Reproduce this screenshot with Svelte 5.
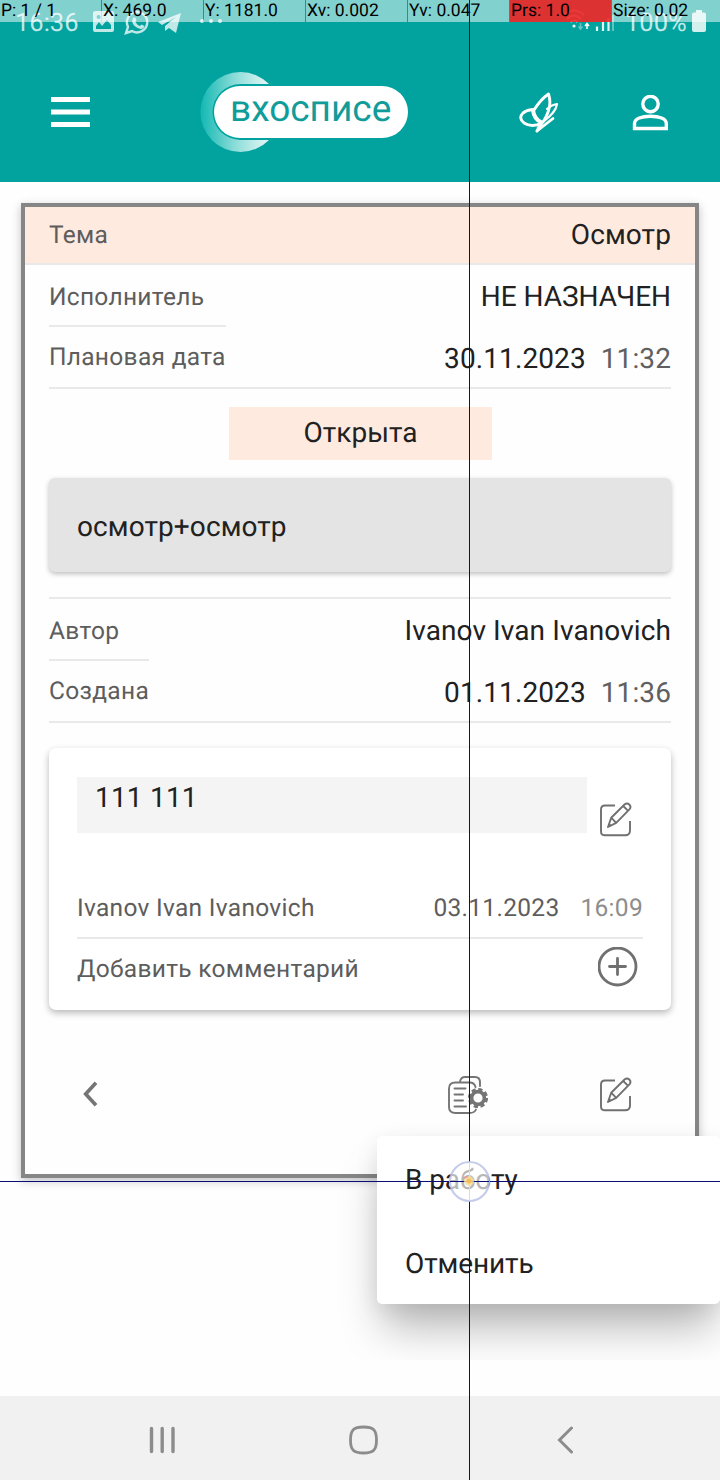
<script>
  const touch = ['P: 1 / 1', 'X: 469.0', 'Y: 1181.0', 'Xv: 0.002', 'Yv: 0.047', 'Prs: 1.0', 'Size: 0.02'];
  const groups = {
    plan: { a: 'Исполнитель', av: 'НЕ НАЗНАЧЕН', b: 'Плановая дата', date: '30.11.2023', time: '11:32' },
    created: { a: 'Автор', av: 'Ivanov Ivan Ivanovich', b: 'Создана', date: '01.11.2023', time: '11:36' }
  };
</script>

{#snippet edit()}
  <svg class="edit" width="34" height="36" viewBox="0 0 34 36" fill="none" stroke="#707070" stroke-width="1.9" stroke-linejoin="round">
    <path d="M16 3.500H6Q2 3.500 2 7.500V29.500Q2 33.300 6 33.300H26Q31 33.300 31 28.500V19" />
    <path d="M9 25L12.2 15.700L25.8 2.300Q28 .4 30.3 2.500Q32.6 4.900 30.4 7.300L17.2 20.900Z M12.2 15.700L17.2 20.900M24.2 4L28.9 8.700" />
    <path d="M9 25L10.200 21L12.800 23.500Z" fill="#707070" stroke="none" />
  </svg>
{/snippet}

{#snippet pair(g)}
  <div class="pair">
    <div class="labels">
      <div class="label first">{g.a}</div>
      <div class="label">{g.b}</div>
    </div>
    <div class="values">
      <div class="value" class:caps={g.av === g.av.toUpperCase()}>{g.av}</div>
      <div class="value second">{g.date}<span class="time">{g.time}</span></div>
    </div>
  </div>
{/snippet}

<div class="screen">
  <header>
    <div class="status">
      <span class="clock">16:36</span>
      <svg class="si" width="135" height="26" viewBox="0 0 135 26" fill="#c0e8e7">
        <path fill-rule="evenodd" d="M3 2H19Q21 2 21 4V21Q21 23 19 23H2Q0 23 0 21V4Q0 2 3 2ZM3 20H18V16L14 11L9 17L6 13L3 17ZM5.5 6A2 2 0 1 0 5.6 6Z" />
        <path d="M35 17.8A10.2 10.2 0 1 1 39 22L33 24Z" fill="none" stroke="#c0e8e7" stroke-width="2.4" />
        <path d="M40 9Q42 7 43.5 11L42.5 13Q44 16 47 17L48.5 15.5L51.5 17Q51 20 47.5 20Q40 18 39 12Z" />
        <path d="M65 13L88 4L83 24L76 19L72 22L72 17L83 8L69 16Z" />
        <circle cx="109" cy="12" r="2" /><circle cx="118" cy="12" r="2" /><circle cx="127" cy="12" r="2" />
      </svg>
      <span class="grow"></span>
      <svg width="52" height="24" viewBox="0 0 52 24" fill="none" stroke="#b9e6e5" stroke-width="2">
        <path d="M2 6Q12 -3 22 6M5 10Q12 3 19 10" />
        <path d="M8.500 13Q12 10 15.500 13" />
        <circle cx="12" cy="17" r="1.600" fill="#e4f6f5" stroke="none" />
        <path d="M18.500 14V19.500M16.500 17.500L18.500 20L20.500 17.500" stroke-width="1.500" opacity=".55" />
        <path d="M25 20V15M23 17L25 14.500L27 17" stroke="#fff" stroke-width="1.500" />
        <path d="M35 22V17.500M41 22V13M46.500 22V9" stroke="#e0f5f4" stroke-width="2.200" /><path d="M51 22V6" opacity=".5" />
      </svg>
      <span class="pct">100%</span>
      <svg class="bat" width="14" height="22" viewBox="0 0 14 22" fill="#d3efee"><path d="M4 0H10V2.500H12Q14 2.500 14 4.500V20Q14 22 12 22H2Q0 22 0 20V4.500Q0 2.500 2 2.500H4Z" /></svg>
    </div>
    <div class="bar">
      <svg class="burger" width="40" height="32" viewBox="0 0 40 32" fill="#fff"><path d="M0 0H39V5H0ZM0 12.500H39V17.500H0ZM0 25H39V30H0Z" /></svg>
      <div class="logo">
        <svg width="209" height="82" viewBox="0 0 209 82">
          <defs><linearGradient id="moon" x1="0" x2="1"><stop offset="0" stop-color="#12b8b3" /><stop offset=".5" stop-color="#8bdcd8" /><stop offset="1" stop-color="#e6f7f6" /></linearGradient></defs>
          <path d="M69 13A40 40 0 1 0 69 69Z" fill="url(#moon)" />
          <rect x="12.500" y="13" width="200" height="56" rx="28" fill="#02a29f" />
          <rect x="14" y="15" width="194" height="52" rx="26" fill="#fff" />
        </svg>
        <span class="word">вхосписе</span>
      </div>
      <span class="grow"></span>
      <svg class="fly" width="40" height="43" viewBox="0 0 40 43" fill="none" stroke="#fff" stroke-width="2.900" stroke-linejoin="round" stroke-linecap="round">
        <path d="M18 39L23 31Q13 36 5 31Q-1 26 4 21Q9 17 15 18M15 18Q22 7 29.500 2Q34 15 24 30" />
        <path d="M14 18Q15 27 22 30" stroke-width="4" />
        <path d="M28 17Q32 13 38 12Q37 20 25 29" stroke-width="2.200" />
        <path d="M18 39L34 26.500M23 31L19 36" stroke-width="2.800" />
      </svg>
      <svg class="user" width="36" height="36" viewBox="0 0 36 36" fill="none" stroke="#fff" stroke-width="3.400"><circle cx="18.500" cy="9" r="7.700" /><path d="M2.500 33.500V28.500C2.500 23.500 10 21.200 18.500 21.200S34.300 23.500 34.300 28.500V33.500Z" /></svg>
    </div>
    <div class="touch">
      {#each touch as t, i}<div class="cell" class:red={i === 5}>{t}</div>{/each}
    </div>
  </header>

  <main>
    <div class="card">
      <div class="topic"><span class="label">Тема</span><span class="value">Осмотр</span></div>
      <div class="body">
        {@render pair(groups.plan)}
        <div class="chip">Открыта</div>
        <div class="desc">осмотр+осмотр</div>
        <div class="rule"></div>
        {@render pair(groups.created)}
        <section class="comments">
          <div class="comment"><div class="text">111 111</div>{@render edit()}</div>
          <div class="meta"><span>Ivanov Ivan Ivanovich</span><span class="grow"></span><span>03.11.2023</span><span class="mtime">16:09</span></div>
          <div class="add">
            <span>Добавить комментарий</span>
            <svg width="40" height="40" viewBox="0 0 40 40" fill="none" stroke="#707070" stroke-width="2.800"><circle cx="19.500" cy="19.500" r="18.500" /><path d="M19.500 11.500V27.500M11.500 19.500H27.500" stroke-linecap="round" /></svg>
          </div>
        </section>
        <div class="actions">
          <svg class="back" width="16" height="26" viewBox="0 0 16 26" fill="none" stroke="#757575" stroke-width="3.700"><path d="M13 1.800L2.700 13L13 24.200" /></svg>
          <span class="grow"></span>
          <svg class="tasks" width="42" height="40" viewBox="0 0 42 40" fill="none" stroke="#757575" stroke-width="1.900" stroke-linecap="round">
            <path d="M13 5.500Q14 1 18 1H28Q33 1 33 6.500V10" />
            <path d="M28.500 11Q27.500 6.500 22.500 6.500H8.500Q2 6.500 2 12.500V31Q2 37 8.500 37H22.500Q27.500 37 29 33.500" />
            <path d="M7.500 12.500H18.500M7.500 18.500H16M7.500 24.500H16M7.500 30.500H19" />
            <circle cx="31" cy="22" r="6.400" stroke-width="3.600" />
            <circle cx="31" cy="22" r="8.700" stroke-width="2.800" stroke-dasharray="4.200 2.633" stroke-linecap="butt" />
          </svg>
          {@render edit()}
        </div>
      </div>
    </div>
    <div class="menuclip">
      <div class="menu"><div class="item">В работу</div><div class="item">Отменить</div></div>
    </div>
  </main>

  <nav>
    <svg width="26" height="28" viewBox="0 0 26 28" stroke="#8c8c8c" stroke-width="3.400" stroke-linecap="round"><path d="M2.500 2.500V25.500M13.200 2.500V25.500M24 2.500V25.500" /></svg>
    <svg class="home" width="30" height="30" viewBox="0 0 30 30" fill="none" stroke="#8c8c8c" stroke-width="2.800"><path d="M15.500 2C25.500 2 28.500 5 28.500 15S25.500 28 15.500 28S2.500 25 2.500 15S5.500 2 15.500 2Z" /></svg>
    <svg width="16" height="28" viewBox="0 0 16 28" fill="none" stroke="#8c8c8c" stroke-width="3" stroke-linecap="round"><path d="M14.500 2L2.500 14L14.500 26" /></svg>
  </nav>

  <div class="vline"></div>
  <div class="hline"></div>
  <svg class="pointer" width="44" height="44" viewBox="0 0 44 44">
    <circle cx="22.500" cy="22.500" r="19.500" fill="#fff" fill-opacity=".68" stroke="#b7bfe5" stroke-opacity=".8" stroke-width="2.200" />
    <path d="M22.500 3V42" stroke="#e6dfb3" stroke-width="1" />
    <path d="M3 22.500H42" stroke="#0c0c78" stroke-width="1" />
    <circle cx="22" cy="22" r="5" fill="#f8dc9a" opacity=".8" /><circle cx="22" cy="22" r="2.500" fill="#f5be55" /><path d="M17 19L21 17.500" stroke="#eb9a9a" stroke-width="1.500" />
  </svg>
</div>

<style>
  :global(body) { background: #fff; }
  .screen, .screen * { box-sizing: border-box; }
  .screen { position: relative; width: 720px; height: 1480px; overflow: hidden; display: flex; flex-direction: column; background: #fefefe; font-family: Roboto, sans-serif; color: #212121; text-rendering: geometricPrecision; }
  svg { display: block; flex: none; }
  .grow { flex: 1; }
  header { position: relative; height: 182px; flex: none; background: #02a29f; display: flex; flex-direction: column; }
  .status { height: 44px; display: flex; align-items: flex-start; padding: 9px 14px 0 15px; color: #c0e8e7; font-size: 25.500px; line-height: 29px; }
  .clock { width: 78px; white-space: nowrap; }
  .pct { margin-left: 11px; margin-right: 6px; width: 61px; white-space: nowrap; }
  .bat { margin-top: 1px; }
  .bar { height: 138px; display: flex; align-items: flex-start; padding: 0 52px 0 51px; }
  .burger { margin-top: 53px; }
  .logo { position: relative; margin: 27px 0 0 109px; width: 209px; height: 82px; }
  .word { position: absolute; left: 30px; top: 18px; font-size: 37px; line-height: 42px; letter-spacing: 0; color: #109c99; }
  .fly { margin: 48px 73px 0 0; }
  .user { margin-top: 51px; }
  .touch { position: absolute; inset: 0 0 auto 0; display: grid; grid-template-columns: repeat(6, 102px) 1fr; height: 22px; }
  .cell { margin-right: 1px; height: 22px; background: rgba(255, 255, 255, 0.5); color: #000; font-size: 17.500px; line-height: 22px; padding-left: 1px; white-space: nowrap; }
  .cell:last-child { margin-right: 0; }
  .cell.red { background: rgba(245, 38, 38, 0.9); }
  main { position: relative; flex: 1; padding: 21px 21px 0; }
  .card { height: 975px; border: 4px solid #868686; background: #fefefe; box-shadow: 0 3px 9px rgba(0, 0, 0, 0.24); display: flex; flex-direction: column; }
  .topic { height: 58px; flex: none; background: #ffeae0; border-bottom: 2px solid #eae8e7; padding: 0 24px; display: flex; justify-content: space-between; align-items: center; }
  .label { font-size: 24.500px; line-height: 30px; letter-spacing: 0.3px; color: #5d5d5d; white-space: nowrap; }
  .value { font-size: 28px; line-height: 34px; letter-spacing: 0.1px; white-space: nowrap; }
  .value.caps { letter-spacing: -0.05px; }
  .body { padding: 0 24px; display: flex; flex-direction: column; }
  .pair { height: 124px; display: flex; justify-content: space-between; border-bottom: 2px solid #e9e9e9; }
  .labels { display: flex; flex-direction: column; }
  .pair .label { height: 60px; padding-top: 15px; }
  .pair .label.first { height: 62px; padding-top: 17px; border-bottom: 2px solid #e9e9e9; }
  .values { display: flex; flex-direction: column; text-align: right; padding-top: 15px; gap: 28px; }
  .time { margin-left: 15px; color: #606060; }
  .chip { align-self: center; width: 263px; height: 53px; margin: 18px 0 0 1px; background: #ffeae0; text-align: center; font-size: 28px; line-height: 52px; }
  .desc { height: 94px; margin-top: 18px; padding-left: 28px; border-radius: 6px; background: #e4e4e4; box-shadow: 0 2px 5px rgba(0, 0, 0, 0.25); font-size: 28px; line-height: 98px; letter-spacing: 0.1px; }
  .rule { height: 2px; margin-top: 25px; background: #e9e9e9; }
  .comments { height: 262px; margin-top: 25px; padding: 29px 28px 0; border-radius: 7px; background: #fff; box-shadow: 0 3px 7px rgba(0, 0, 0, 0.28); font-size: 24.500px; line-height: 30px; letter-spacing: 0.3px; color: #5d5d5d; }
  .comment { display: flex; height: 56px; }
  .comment .text { width: 510px; background: #f4f4f4; padding: 4px 18px; color: #212121; font-size: 28px; line-height: 34px; letter-spacing: 0.2px; }
  .comment :global(.edit) { margin: 25px 0 0 12px; }
  .meta { display: flex; height: 106px; padding-top: 60px; border-bottom: 2px solid #e9e9e9; white-space: nowrap; }
  .mtime { margin-left: 21px; color: #8d8d8d; }
  .add { display: flex; justify-content: space-between; height: 60px; padding: 8px 5px 0 0; }
  .add span { padding-top: 7px; }
  .actions { display: flex; align-items: flex-start; height: 160px; padding: 66px 38px 0 34px; }
  .actions :global(.edit) { margin-top: 1px; }
  .back { margin-top: 5px; }
  .tasks { margin-right: 110px; }
  .menuclip { position: absolute; left: 327px; top: 914px; width: 393px; height: 264px; padding: 40px 0 0 50px; overflow: hidden; }
  .menu { width: 343px; height: 168px; background: #fff; border-radius: 5px; box-shadow: 0 30px 40px -6px rgba(0, 0, 0, 0.27), 0 5px 22px rgba(0, 0, 0, 0.08); padding-left: 28px; font-size: 28px; letter-spacing: -0.1px; }
  .item { height: 84px; line-height: 88px; }
  nav { height: 84px; flex: none; background: #f1f1f1; display: flex; align-items: center; padding: 3px 147px 0 149px; justify-content: space-between; }
  .home { margin-right: 6px; }
  .vline { position: absolute; left: 469px; top: 0; width: 1px; height: 1480px; background: #0c0c78; }
  .hline { position: absolute; left: 0; top: 1181px; width: 720px; height: 1px; background: #0c0c78; }
  .pointer { position: absolute; left: 447px; top: 1159px; }
</style>
